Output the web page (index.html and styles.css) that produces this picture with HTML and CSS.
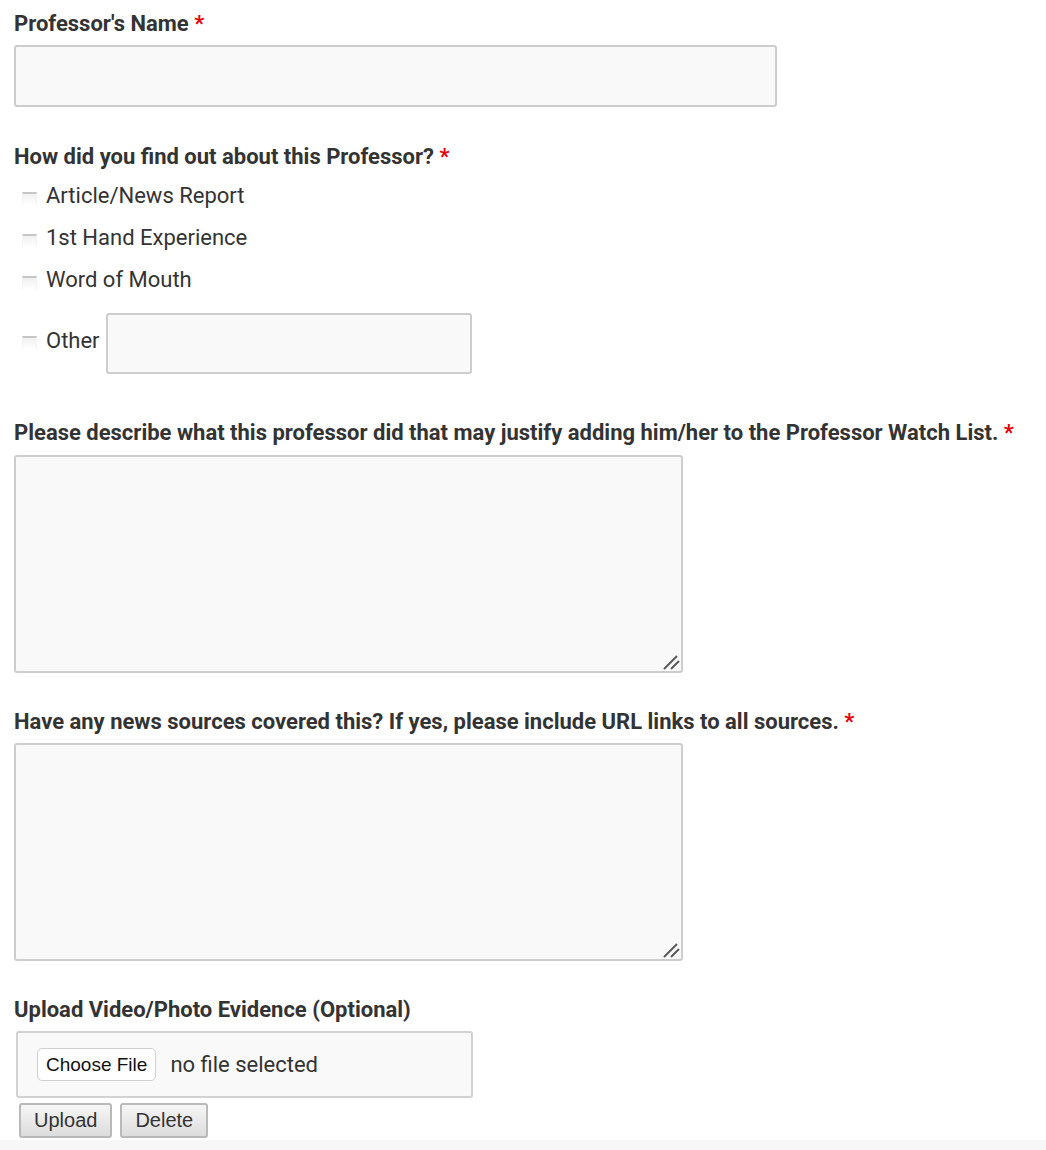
FILE: index.html
```html
<!DOCTYPE html>
<html lang="en">
<head>
    <meta charset="UTF-8">
    <meta name="viewport" content="width=device-width, initial-scale=1.0">
    <title>Professor Watch List</title>
    <link rel="stylesheet" href="styles.css">
</head>
<body>
    <form class="watch-form">
        <div class="field field-name">
            <label class="field-label" for="prof-name">Professor's Name <span class="req">*</span></label>
            <input type="text" id="prof-name" class="text-input name-input">
        </div>

        <div class="field field-found">
            <div class="field-label">How did you find out about this Professor? <span class="req">*</span></div>
            <div class="options">
                <label class="option"><input type="checkbox" class="check"><span>Article/News Report</span></label>
                <label class="option"><input type="checkbox" class="check"><span>1st Hand Experience</span></label>
                <label class="option"><input type="checkbox" class="check"><span>Word of Mouth</span></label>
                <div class="option option-other">
                    <label class="option-inner"><input type="checkbox" class="check"><span>Other</span></label>
                    <input type="text" class="text-input other-input">
                </div>
            </div>
        </div>

        <div class="field field-describe">
            <label class="field-label" for="describe">Please describe what this professor did that may justify adding him/her to the Professor Watch List. <span class="req">*</span></label>
            <div class="area-wrap">
                <textarea id="describe" class="text-area"></textarea>
                <svg class="grip" width="18" height="18" viewBox="0 0 18 18"><path d="M1 16 L14 3 M8 16 L16 8" stroke="#5a5a5a" stroke-width="2" fill="none"/></svg>
            </div>
        </div>

        <div class="field field-sources">
            <label class="field-label" for="sources">Have any news sources covered this? If yes, please include URL links to all sources. <span class="req">*</span></label>
            <div class="area-wrap">
                <textarea id="sources" class="text-area"></textarea>
                <svg class="grip" width="18" height="18" viewBox="0 0 18 18"><path d="M1 16 L14 3 M8 16 L16 8" stroke="#5a5a5a" stroke-width="2" fill="none"/></svg>
            </div>
        </div>

        <div class="field field-upload">
            <div class="field-label">Upload Video/Photo Evidence (Optional)</div>
            <div class="file-box">
                <button type="button" class="choose-btn">Choose File</button>
                <span class="file-name">no file selected</span>
            </div>
            <div class="upload-actions">
                <button type="button" class="grey-btn">Upload</button>
                <button type="button" class="grey-btn">Delete</button>
            </div>
        </div>
    </form>
</body>
</html>
```

FILE: styles.css
```css
*{
    padding: 0;
    margin: 0;
    box-sizing: border-box;
}
body{
    background-color: #f7f7f7;
    font-family: Roboto, "Liberation Sans", Arial, sans-serif;
    color: #333;
}

.watch-form{
    background-color: #fff;
    padding: 12px 0 2px 14px;
}

.field-label{
    display: block;
    font-size: 22px;
    font-weight: 700;
    line-height: 24px;
    color: #333;
}

.req{
    color: #e8000b;
}

.field-name{
    margin-bottom: 38px;
}
.field-name .field-label{
    margin-bottom: 9px;
}

.text-input{
    display: block;
    border: 2px solid #cdcdcd;
    border-radius: 3px;
    background-color: #f9f9f9;
    font-family: inherit;
    font-size: 18px;
    outline: none;
}

.name-input{
    width: 763px;
    height: 62px;
}

.options{
    display: flex;
    flex-direction: column;
    padding-left: 8px;
    margin-top: 6px;
}

.option{
    display: flex;
    align-items: center;
    height: 42px;
    font-size: 22px;
    line-height: 24px;
}

.option-inner{
    display: flex;
    align-items: center;
    margin-bottom: 6px;
}

.check{
    appearance: none;
    -webkit-appearance: none;
    width: 15px;
    height: 13px;
    margin: 4px 9px 0 0;
    border-top: 2px solid #c6c6c6;
    border-left: 1px solid #f3f3f3;
    border-right: 1px solid #f3f3f3;
    background: linear-gradient(#f0f0f0, #fff);
}

.option-other{
    height: 61px;
    margin-top: 12px;
    gap: 6px;
}

.other-input{
    width: 366px;
    height: 61px;
}

.field-found{
    margin-bottom: 47px;
}

.area-wrap{
    position: relative;
    width: 669px;
    margin-top: 10px;
}

.text-area{
    display: block;
    width: 669px;
    height: 218px;
    border: 2px solid #cdcdcd;
    border-radius: 3px;
    background-color: #f9f9f9;
    font-family: inherit;
    font-size: 18px;
    outline: none;
    resize: none;
}

.grip{
    position: absolute;
    right: 2px;
    bottom: 2px;
    pointer-events: none;
}

.field-describe{
    margin-bottom: 37px;
}

.field-sources{
    margin-bottom: 37px;
}
.field-sources .area-wrap{
    margin-top: 9px;
}

.file-box{
    width: 457px;
    height: 67px;
    margin: 9px 0 0 2px;
    border: 2px solid #d2d2d2;
    border-radius: 3px;
    background-color: #f9f9f9;
    display: flex;
    align-items: center;
    padding-left: 19px;
    gap: 14px;
}

.choose-btn{
    height: 33px;
    padding: 0 8px;
    background-color: #fff;
    border: 1px solid #cfcfcf;
    border-radius: 5px;
    font-family: "Liberation Sans", Arial, sans-serif;
    font-size: 19px;
    color: #111;
}

.file-name{
    font-size: 22px;
    color: #333;
}

.upload-actions{
    display: flex;
    gap: 8px;
    margin: 5px 0 0 5px;
}

.grey-btn{
    height: 35px;
    padding: 0 13px;
    border: 2px solid #b9b9b9;
    border-radius: 3px;
    background: linear-gradient(#f6f6f6, #dcdcdc);
    font-family: "Liberation Sans", Arial, sans-serif;
    font-size: 20px;
    color: #333;
}
```
